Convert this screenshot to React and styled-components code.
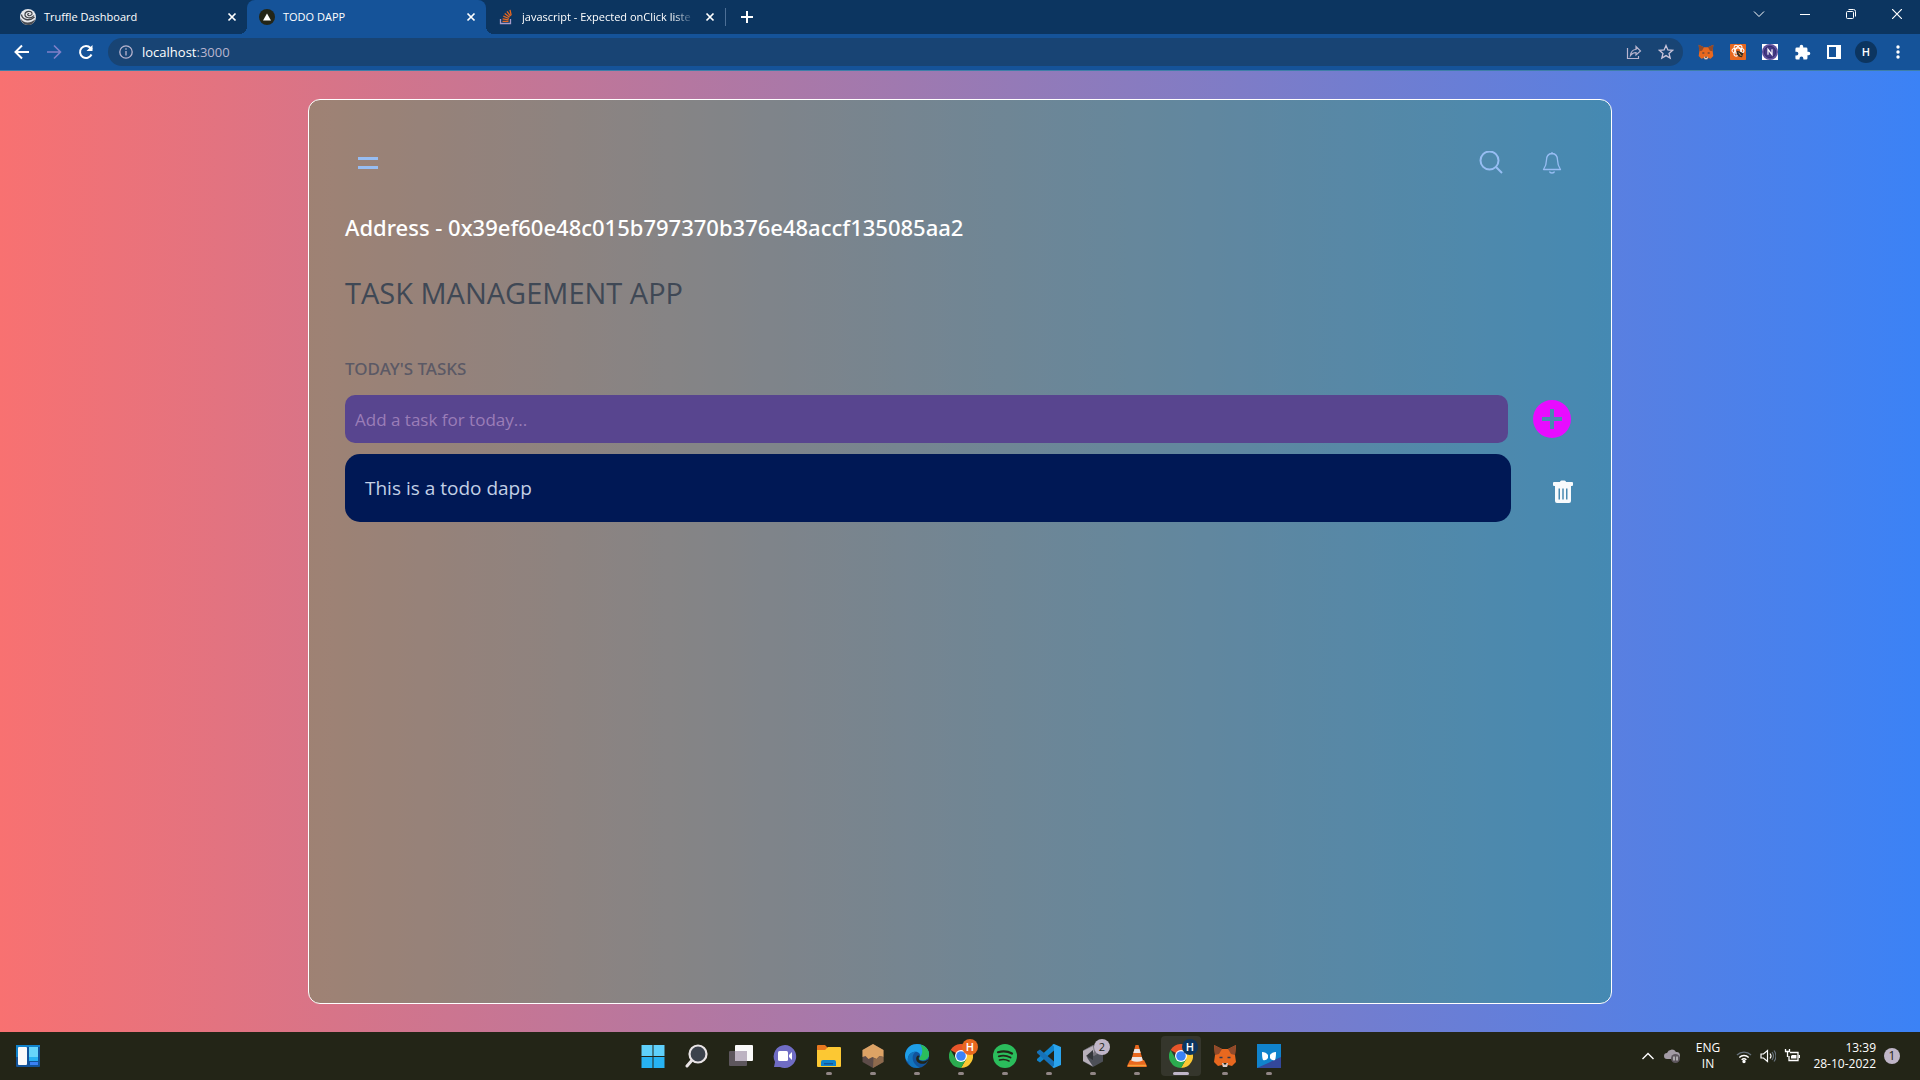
import React, { useState } from "react";
import styled, { createGlobalStyle } from "styled-components";

const GlobalStyle = createGlobalStyle`
  *, *::before, *::after { box-sizing: border-box; }
  body {
    margin: 0;
    font-family: "Open Sans", "Noto Sans", sans-serif;
  }
  button {
    border: 0;
    padding: 0;
    background: none;
    color: inherit;
    font: inherit;
    display: flex;
    align-items: center;
    justify-content: center;
  }
  svg { display: block; flex: none; }
`;

const Desktop = styled.div`
  min-height: 100vh;
  display: flex;
  flex-direction: column;
  background: #155399;
`;

/* ---------- browser chrome ---------- */

const TabStrip = styled.header`
  height: 34px;
  display: flex;
  padding-left: 8px;
  background: #0c3560;
  color: #fff;
`;

const Tab = styled.div`
  position: relative;
  width: 239px;
  display: flex;
  align-items: center;
  gap: 8px;
  padding: 0 7px 0 12px;
  border-radius: 8px 8px 0 0;
  font-size: 11px;
  line-height: 16px;
  background: ${(p) => (p.$active ? "#155399" : "transparent")};

  &::before, &::after {
    content: "";
    display: ${(p) => (p.$active ? "block" : "none")};
    position: absolute;
    bottom: 0;
    width: 8px;
    height: 8px;
  }
  &::before {
    left: -8px;
    background: radial-gradient(circle at 0 0, transparent 8px, #155399 8px);
  }
  &::after {
    right: -8px;
    background: radial-gradient(circle at 100% 0, transparent 8px, #155399 8px);
  }
`;

const TabTitle = styled.span`
  flex: 1;
  min-width: 0;
  white-space: nowrap;
  ${(p) => p.$fade && "mask-image: linear-gradient(to right, #000 88%, transparent);"}
`;

const TabClose = styled.button`
  width: 16px;
  height: 16px;
`;

const TabDivider = styled.span`
  width: 1px;
  height: 18px;
  margin-top: 8px;
  background: #4d6f96;
`;

const NewTab = styled.button`
  width: 42px;
`;

const WindowControls = styled.div`
  display: flex;
  height: 28px;
  margin-left: auto;
`;

const WindowButton = styled.button`
  width: 46px;
`;

const Toolbar = styled.nav`
  height: 37px;
  display: flex;
  align-items: center;
  padding: 0 6px;
  border-bottom: 1px solid #3f7fa8;
  color: #fff;
`;

const ToolButton = styled.button`
  width: 32px;
  height: 28px;
  color: ${(p) => (p.$dim ? "#8080c8" : "#fff")};
`;

const Omnibox = styled.div`
  flex: 1;
  height: 28px;
  margin: 0 7px 0 6px;
  padding: 0 1px 0 11px;
  display: flex;
  align-items: center;
  border-radius: 14px;
  background: #184474;
  color: #b9b5cf;
`;

const UrlText = styled.span`
  flex: 1;
  padding-left: 9px;
  font-size: 13px;
  line-height: 20px;
  b { font-weight: 400; color: #fff; }
`;

const Avatar = styled.span`
  width: 22px;
  height: 22px;
  display: grid;
  place-items: center;
  border-radius: 50%;
  background: #0c3560;
  font-size: 11px;
  line-height: 16px;
  font-weight: 600;
`;

/* ---------- page ---------- */

const Page = styled.main`
  flex: 1;
  display: flex;
  justify-content: center;
  padding: 28px;
  background: linear-gradient(to right, #f87171, #3b82f6);
`;

const Card = styled.section`
  flex: 1;
  max-width: 1304px;
  padding: 40px 36px;
  border: 1px solid #fff;
  border-radius: 12px;
  background: rgba(22, 163, 74, 0.3);
`;

const CardHeader = styled.div`
  display: flex;
  gap: 15px;
  color: #97bdf3;
`;

const IconButton = styled.button`
  width: 46px;
  height: 46px;
  &:first-child { margin-right: auto; }
`;

const Address = styled.h2`
  margin: 25px 0 0;
  font-family: "Noto Sans", "Open Sans", sans-serif;
  font-size: 22px;
  line-height: 32px;
  font-weight: 500;
  color: #fff;
`;

const Title = styled.h1`
  margin: 32px 0 0;
  font-size: 29px;
  line-height: 36px;
  font-weight: 400;
  color: #3f4855;
`;

const SectionLabel = styled.h3`
  margin: 44px 0 12px;
  font-family: "Noto Sans", "Open Sans", sans-serif;
  font-size: 17px;
  line-height: 28px;
  font-weight: 500;
  color: #5b5965;
`;

const AddRow = styled.form`
  display: flex;
  align-items: center;
  gap: 20px;
  margin-bottom: 11px;
`;

const TaskInput = styled.input`
  flex: 1;
  min-width: 0;
  height: 48px;
  padding: 0 10px;
  border: 0;
  border-radius: 10px;
  background: #58458f;
  color: #fff;
  font-family: inherit;
  font-size: 17px;
  &::placeholder { color: #9b7db8; opacity: 1; }
`;

const AddButton = styled.button`
  width: 47px;
  height: 48px;
  color: #e80cff;
`;

const TaskList = styled.ul`
  margin: 0;
  padding: 0;
  list-style: none;
`;

const TaskRow = styled.li`
  display: flex;
  align-items: center;
  gap: 40px;
`;

const TaskText = styled.div`
  flex: 1;
  padding: 20px;
  border-radius: 15px;
  background: #001855;
  color: #c3d0e6;
  font-size: 19px;
  line-height: 28px;
`;

const DeleteButton = styled.button`
  width: 24px;
  padding-top: 8px;
  color: #f8fafc;
`;

/* ---------- taskbar ---------- */

const Taskbar = styled.footer`
  height: 48px;
  display: grid;
  grid-template-columns: 1fr auto 1fr;
  align-items: center;
  background: #232517;
  color: #fff;
`;

const Widgets = styled.button`
  width: 56px;
  height: 48px;
`;

const Apps = styled.div`
  display: flex;
  gap: 4px;
  padding-left: 2px;
`;

const AppButton = styled.button`
  position: relative;
  width: 40px;
  height: 40px;
  border-radius: 4px;
  background: ${(p) => (p.$active ? "#35362c" : "transparent")};
  &::after {
    content: "";
    display: ${(p) => (p.$running ? "block" : "none")};
    position: absolute;
    bottom: 1px;
    width: ${(p) => (p.$active ? "16px" : "6px")};
    height: 3px;
    border-radius: 2px;
    background: ${(p) => (p.$active ? "#c0b6c8" : "#918686")};
  }
`;

const Badge = styled.span`
  position: absolute;
  top: 3px;
  right: 3px;
  width: 16px;
  height: 16px;
  display: grid;
  place-items: center;
  border-radius: 50%;
  background: ${(p) => p.$bg};
  color: ${(p) => p.$fg || "#fff"};
  font-size: 11px;
  line-height: 16px;
  font-weight: ${(p) => (p.$fg ? 400 : 600)};
`;

const Tray = styled.div`
  display: flex;
  align-items: center;
  justify-content: flex-end;
  padding-right: 20px;
  font-size: 12px;
  line-height: 16px;
`;

const TrayButton = styled.button`
  width: 24px;
  height: 40px;
`;

const Language = styled.button`
  width: 48px;
  text-align: center;
`;

const Clock = styled.time`
  width: 72px;
  margin-right: 8px;
  text-align: right;
  white-space: nowrap;
`;

const Count = styled.span`
  width: 16px;
  height: 16px;
  display: grid;
  place-items: center;
  border-radius: 50%;
  background: #c0b6c8;
  color: #232517;
`;

/* ---------- icons ---------- */

const Line = ({ size = 16, w = 1.5, box = size, children }) => (
  <svg width={size} height={size} viewBox={`0 0 ${box} ${box}`} fill="none" stroke="currentColor" strokeWidth={w}>
    {children}
  </svg>
);

const Art = ({ size = 24, children }) => (
  <svg width={size} height={size} viewBox="0 0 24 24">{children}</svg>
);

const CloseIcon = () => <Line size={10} w={1.7}><path d="M1.5 1.5l7 7M8.5 1.5l-7 7" /></Line>;

const TruffleIcon = () => (
  <svg width="16" height="16" viewBox="0 0 16 16">
    <circle cx="8" cy="8" r="8" fill="#e6e8ec" />
    <path d="M.8 9.500C3 14 10 15 15 10.500 14.500 14 11.500 16 8 16 4 16 1 13 .8 9.500z" fill="#4a4c52" />
    <path d="M1.500 5.500C2 10.500 9 13 14.500 8" fill="none" stroke="#3f4248" strokeWidth="1.300" />
    <path d="M14 6.500C11 10.500 4.500 9 5 5c.5-3 6-3.500 7-1 .7 2-2.500 3.500-4 2.200-1-1 .3-2 1.200-1.500" fill="none" stroke="#3f4248" strokeWidth="1.200" />
  </svg>
);

const DappIcon = () => (
  <svg width="16" height="16" viewBox="0 0 16 16">
    <circle cx="8" cy="8" r="8" fill="#232517" />
    <path d="M8 4.500l4 7H4z" fill="#fff" />
  </svg>
);

const StackIcon = () => (
  <svg width="16" height="16" viewBox="0 0 16 16" fill="none" strokeWidth="1.300">
    <path d="M2.500 10v4.500h10V10" stroke="#a89bc8" />
    <path d="M4.500 12.300h6M4.600 9.900l6 1M5.300 7.200l5.600 2.300M6.700 4.500l4.900 3.700M9 2.300l3.500 4.800M12 .8l1.200 5.500" stroke="#e8681f" />
  </svg>
);

const Fox = ({ size = 16 }) => (
  <Art size={size}>
    <path d="M1 1l8 4h6l8-4-1 10 1 7-4 4-4-1-1 2h-4l-1-2-4 1-4-4 1-7z" fill="#e8681f" />
    <path d="M1 1l8 4-3 5-4 1zM23 1l-8 4 3 5 4 1z" fill="#8f4a2b" />
    <path d="M9 19h6l-1 4h-4z" fill="#d9cfd0" />
    <path d="M10.500 19h3l-.5 1.500h-2z" fill="#232517" />
    <path d="M6.500 13.500h3M17.500 13.500h-3" stroke="#31384c" strokeWidth="1.500" />
  </Art>
);

const ReactToolIcon = () => (
  <Art size={16}>
    <rect width="24" height="24" rx="1" fill="#e8681f" />
    <g fill="none" stroke="#fff" strokeWidth="1.600">
      <ellipse cx="12" cy="10" rx="9" ry="4" />
      <ellipse cx="12" cy="10" rx="9" ry="4" transform="rotate(60 12 10)" />
      <ellipse cx="12" cy="10" rx="9" ry="4" transform="rotate(120 12 10)" />
    </g>
    <path d="M10 10l4 1 6 3-2 6-5-1-3-4z" fill="#3a2b20" />
    <path d="M13 13l4 5" stroke="#e8a13c" strokeWidth="1.500" />
  </Art>
);

const NIcon = () => (
  <Art size={16}>
    <rect width="24" height="24" fill="#fff" />
    <circle cx="12" cy="12" r="12" fill="#5d4f9c" />
    <circle cx="12" cy="12" r="8.500" fill="#443a86" stroke="#2a245c" />
    <path d="M9 16V8l6 8V8" fill="none" stroke="#fff" strokeWidth="1.800" />
  </Art>
);

const PuzzleIcon = () => (
  <Art size={17}>
    <path fill="#fff" d="M20.500 11H19V7a2 2 0 0 0-2-2h-4V3.500a2.500 2.500 0 0 0-5 0V5H4a2 2 0 0 0-2 2v3.800h1.500a2.700 2.700 0 0 1 0 5.400H2V20a2 2 0 0 0 2 2h3.800v-1.500a2.700 2.700 0 0 1 5.400 0V22H17a2 2 0 0 0 2-2v-4h1.500a2.500 2.500 0 0 0 0-5z" />
  </Art>
);

const SidePanelIcon = () => (
  <svg width="14" height="14" viewBox="0 0 14 14"><path fill="#fff" fillRule="evenodd" d="M0 0h14v14H0zM2 2v10h7V2z" /></svg>
);

const MenuDots = () => (
  <svg width="4" height="14" viewBox="0 0 4 14" fill="#fff">
    <circle cx="2" cy="2" r="1.700" /><circle cx="2" cy="7" r="1.700" /><circle cx="2" cy="12" r="1.700" />
  </svg>
);

const MenuIcon = () => (
  <svg width="20" height="12" viewBox="0 0 20 12" fill="currentColor"><path d="M0 0h20v3H0zM0 9h20v3H0z" /></svg>
);

const SearchIcon = () => (
  <Line size={24} w={2}><circle cx="10.500" cy="9.500" r="9" /><path d="M16.500 15.500l6.500 6.500" /></Line>
);

const BellIcon = () => (
  <Line size={24} w={1.3}>
    <path d="M12 1v1.500C8 2.800 6.500 6 6.500 9c0 4.500-1 6.500-3 9.500h17c-2-3-3-5-3-9.500 0-3-1.500-6.200-5.500-6.500" strokeLinejoin="round" />
    <path d="M9.500 20.500c.5 2 4.500 2 5 0" />
  </Line>
);

const PlusCircle = () => (
  <svg width="38" height="38" viewBox="0 0 38 38">
    <path fill="currentColor" fillRule="evenodd" d="M19 0a19 19 0 1 1 0 38 19 19 0 0 1 0-38zM17 9v8H9v4h8v8h4v-8h8v-4h-8V9z" />
  </svg>
);

const TrashIcon = () => (
  <svg width="20" height="24" viewBox="0 0 20 24">
    <path
      fill="currentColor"
      fillRule="evenodd"
      d="M7 2q0-1.500 1.500-1.500h3q1.500 0 1.500 1.500h6q1 0 1 1v2q0 1-1 1h-1v15q0 2-2 2H4q-2 0-2-2V6H1q-1 0-1-1V3q0-1 1-1zM5.500 8.500v11H7v-11zM9.250 8.500v11h1.500v-11zM13 8.500v11h1.500v-11z"
    />
  </svg>
);

const WidgetsIcon = () => (
  <Art>
    <rect y="1" width="24" height="22" rx="1" fill="#12539a" />
    <path d="M0 1h24v2H2v10H0z" fill="#1083cc" />
    <rect x="2" y="3" width="9" height="18" rx="1" fill="#fafafa" />
    <path d="M13 3h9v10h-9z" fill="#67d5fa" /><path d="M13 13h9v4h-9z" fill="#27b2f2" /><path d="M14 18h8v3h-8z" fill="#3b82f6" />
  </Art>
);

const WindowsIcon = () => (
  <Art>
    <path d="M.5 1h11v11h-11zM12.500 1h11v11h-11z" fill="#5fd0fb" />
    <path d="M.5 13h11v11h-11zM12.500 13h11v11h-11z" fill="#27b2f2" />
  </Art>
);

const TaskSearchIcon = () => (
  <Art>
    <path d="M2 22l6-7" stroke="#e9e4e6" strokeWidth="3" strokeLinecap="round" />
    <circle cx="13" cy="10" r="8.500" fill="#3b424c" stroke="#e9e4e6" strokeWidth="2.200" />
  </Art>
);

const TaskViewIcon = () => (
  <Art>
    <rect x="6" y="1" width="18" height="16" rx="1" fill="#fafafa" />
    <rect x="0" y="7" width="18" height="15" rx="1" fill="#5d565d" />
    <path d="M6 7h12v10H6z" fill="#bdb3c2" />
  </Art>
);

const ChatIcon = () => (
  <Art>
    <path d="M12 1a11.500 11.500 0 1 1-5 22H1l1-5A11.500 11.500 0 0 1 12 1z" fill="#6f6cc4" />
    <rect x="5" y="7" width="10" height="10" rx="1.500" fill="#fff" /><path d="M16 11l3-3v8l-3-3z" fill="#fff" />
  </Art>
);

const FolderIcon = () => (
  <Art>
    <path d="M0 2q0-1 1-1h7l3 3v4H0z" fill="#e8781f" />
    <path d="M0 6h8l3-3h12q1 0 1 1v18q0 1-1 1H1q-1 0-1-1z" fill="#fcc833" />
    <path d="M4 22v-4q0-2 2-2h11q2 0 2 2v4z" fill="#1083cc" /><path d="M7 19h9v1.500H7z" fill="#12539a" />
  </Art>
);

const GanacheIcon = () => (
  <Art>
    <path d="M12 0l10.500 6v12L12 24 1.500 18V6z" fill="#5d4c49" />
    <path d="M12 0l10.500 6v7l-4-1-3 3-4-2-4 2-3-3-3 1V6z" fill="#dda365" />
    <path d="M12 24l10.500-6v-5l-4-1-3 3-3-1z" fill="#8e6a4d" />
  </Art>
);

const EdgeIcon = () => (
  <Art>
    <circle cx="12" cy="12" r="12" fill="#12539a" />
    <path d="M0 11C1 3 7 0 12 0c8 0 12 6 12 10 0 5-4 7-8 6-2 0-2-2-1-3 1-3-2-6-6-5-5 1-7 5-6 10-2-2-3-4-3-7z" fill="#1f9fe8" />
    <path d="M15 .5C21 2 24 6 24 10c0 5-4 7-8 6-2 0-2-2-1-3 3-3 3-9 0-12.500z" fill="#2bbd5c" />
    <path d="M3 18C2 12 6 7 10.500 8 5 12 8 21 15 23.500 9 25 4 22 3 18z" fill="#1274bd" />
    <path d="M14.500 12c-1.500 2-1 4.500 1.500 5 3 .8 5 0 8-2-1 2-2 3-4 4.500-6 1.500-10-2.500-8.500-6.500.6-1.500 2-2 3-1z" fill="#232517" />
  </Art>
);

const ChromeIcon = () => (
  <Art>
    <path d="M12 12L1.600 6A12 12 0 0 1 22.400 6z" fill="#e8552a" />
    <path d="M12 6h10.400A12 12 0 0 1 12 24l5.200-9z" fill="#fcc833" />
    <path d="M6.800 15L1.600 6A12 12 0 0 0 12 24l5.200-9z" fill="#2bab4f" />
    <circle cx="12" cy="12" r="6" fill="#fff" /><circle cx="12" cy="12" r="4.800" fill="#3b82f6" />
  </Art>
);

const SpotifyIcon = () => (
  <Art>
    <circle cx="12" cy="12" r="12" fill="#2bbd5c" />
    <g fill="none" stroke="#232517" strokeLinecap="round">
      <path d="M5 8.200c5-1.500 10-1 14 1.300" strokeWidth="2.200" />
      <path d="M5.800 12.300c4-1.200 8-.8 11.700 1.200" strokeWidth="1.900" />
      <path d="M6.500 16c3.500-.9 6.500-.6 9.500 1" strokeWidth="1.600" />
    </g>
  </Art>
);

const CodeIcon = () => (
  <Art>
    <path d="M17 0v6.500L3 18.500 0 16.500v-1.500L16 .5z" fill="#1083cc" />
    <path d="M17 24v-6.500L3 5.500 0 7.500V9l16 14.500z" fill="#1671b8" />
    <path d="M17 0l7 3v18l-7 3-1.500-1 1.500-1.500v-19L15.500 1z" fill="#2aa4ee" />
  </Art>
);

const CubeIcon = () => (
  <Art>
    <path d="M12 1l10 5.500v11L12 23 2 17.500v-11z" fill="#4d5058" />
    <path d="M12 1l10 5.500L13 12 2 6.500z" fill="#75727a" />
    <path d="M12 2L2 7v10l10 5.500-6-9 7-5.500z" fill="#b8b0ba" />
    <path d="M12 6l-7 6 7 4z" fill="#34363a" />
  </Art>
);

const ConeIcon = () => (
  <Art>
    <path d="M5 16h14l3 6q0 1-1 1H3q-1 0-1-1z" fill="#e8681f" />
    <path d="M10.500 1h3l4.500 16q-6 3-12 0z" fill="#e8681f" />
    <path d="M9.500 5h5l1.200 4H8.300zM7.200 13h9.600l1 3.500q-5.800 2.500-11.600 0z" fill="#ebe5e5" />
    <path d="M3 21.500h18" stroke="#f5a33c" strokeWidth="1.500" />
  </Art>
);

const BowtieIcon = () => (
  <Art>
    <rect width="24" height="24" fill="#1083cc" /><path d="M0 24h24V13z" fill="#33489b" />
    <path d="M5 8q4 0 6 3v3q-2 3-5 2-1-2-1-8zM19 8q-4 0-6 3v3q2 3 5 2 1-2 1-8z" fill="#fff" />
  </Art>
);

const APPS = [
  { name: "Start", icon: <WindowsIcon /> },
  { name: "Search", icon: <TaskSearchIcon /> },
  { name: "Task view", icon: <TaskViewIcon /> },
  { name: "Chat", icon: <ChatIcon /> },
  { name: "File Explorer", icon: <FolderIcon />, running: true },
  { name: "Ganache", icon: <GanacheIcon />, running: true },
  { name: "Edge", icon: <EdgeIcon />, running: true },
  { name: "Chrome", icon: <ChromeIcon />, running: true, badge: ["H", "#e8681f"] },
  { name: "Spotify", icon: <SpotifyIcon />, running: true },
  { name: "Code", icon: <CodeIcon />, running: true },
  { name: "Hardhat", icon: <CubeIcon />, running: true, badge: ["2", "#c0b6c8", "#232517"] },
  { name: "VLC", icon: <ConeIcon />, running: true },
  { name: "Chrome profile", icon: <ChromeIcon />, running: true, active: true, badge: ["H", "#0c3560"] },
  { name: "MetaMask", icon: <Fox size={24} />, running: true },
  { name: "Recorder", icon: <BowtieIcon />, running: true },
];

const TABS = [
  { title: "Truffle Dashboard", icon: <TruffleIcon /> },
  { title: "TODO DAPP", icon: <DappIcon />, active: true },
  { title: "javascript - Expected onClick liste", icon: <StackIcon />, fade: true },
];

const EXTENSIONS = [
  ["MetaMask", <Fox />],
  ["React tools", <ReactToolIcon />],
  ["N", <NIcon />],
  ["Extensions", <PuzzleIcon />],
  ["Side panel", <SidePanelIcon />],
  ["Profile", <Avatar>H</Avatar>],
  ["Menu", <MenuDots />],
];

function BrowserChrome() {
  return (
    <>
      <TabStrip>
        {TABS.map((t) => (
          <Tab key={t.title} $active={t.active}>
            {t.icon}
            <TabTitle $fade={t.fade}>{t.title}</TabTitle>
            <TabClose aria-label="Close tab"><CloseIcon /></TabClose>
          </Tab>
        ))}
        <TabDivider />
        <NewTab aria-label="New tab"><Line size={12} w={2}><path d="M6 0v12M0 6h12" /></Line></NewTab>
        <WindowControls>
          <WindowButton aria-label="Search tabs"><Line size={12} w={1}><path d="M1 3.500l5 5 5-5" /></Line></WindowButton>
          <WindowButton aria-label="Minimize"><Line size={10} w={1}><path d="M0 5.500h10" /></Line></WindowButton>
          <WindowButton aria-label="Restore"><Line size={10} w={1}><rect x=".5" y="2.500" width="7" height="7" rx="1" /><path d="M2.500.5h5q2 0 2 2v5" /></Line></WindowButton>
          <WindowButton aria-label="Close"><Line size={10} w={1.2}><path d="M0 0l10 10M10 0L0 10" /></Line></WindowButton>
        </WindowControls>
      </TabStrip>
      <Toolbar>
        <ToolButton aria-label="Back"><Line w={2}><path d="M15 8H2M8 1.500L1.500 8 8 14.500" /></Line></ToolButton>
        <ToolButton aria-label="Forward" $dim><Line w={1.6}><path d="M1 8h13M8 1.500L14.500 8 8 14.500" /></Line></ToolButton>
        <ToolButton aria-label="Reload"><Line w={2}><path d="M13.500 10.500A6 6 0 1 1 12.500 4L14 5.500" /><path d="M14.500 1v6H8.500z" fill="currentColor" stroke="none" /></Line></ToolButton>
        <Omnibox>
          <Line size={14} w={1.3}><circle cx="7" cy="7" r="6.200" /><path d="M7 6v4.500M7 3.300v1.500" /></Line>
          <UrlText><b>localhost</b>:3000</UrlText>
          <ToolButton aria-label="Share">
            <Line w={1.2}><path d="M1.500 4v10.500h11V12M4.500 11.500c.5-4 2.500-6 5.500-6V2.500l4.500 4.500L10 11V8.500c-2.500 0-4 1-5.500 3z" stroke="#b9b5cf" /></Line>
          </ToolButton>
          <ToolButton aria-label="Bookmark">
            <Line w={1.3}><path d="M8 1.500l1.900 4.400 4.800.4-3.700 3.100 1.200 4.700L8 11.600l-4.200 2.500L5 9.400 1.300 6.300l4.800-.4z" stroke="#c9c4da" /></Line>
          </ToolButton>
        </Omnibox>
        {EXTENSIONS.map(([name, icon]) => (
          <ToolButton key={name} aria-label={name}>{icon}</ToolButton>
        ))}
      </Toolbar>
    </>
  );
}

function TodoPage() {
  const [tasks, setTasks] = useState(["This is a todo dapp"]);
  const [draft, setDraft] = useState("");

  const addTask = (e) => {
    e.preventDefault();
    if (!draft.trim()) return;
    setTasks([...tasks, draft.trim()]);
    setDraft("");
  };

  return (
    <Page>
      <Card>
        <CardHeader>
          <IconButton aria-label="Menu"><MenuIcon /></IconButton>
          <IconButton aria-label="Search"><SearchIcon /></IconButton>
          <IconButton aria-label="Notifications"><BellIcon /></IconButton>
        </CardHeader>
        <Address>Address - 0x39ef60e48c015b797370b376e48accf135085aa2</Address>
        <Title>TASK MANAGEMENT APP</Title>
        <SectionLabel>TODAY'S TASKS</SectionLabel>
        <AddRow onSubmit={addTask}>
          <TaskInput
            aria-label="New task"
            placeholder="Add a task for today..."
            value={draft}
            onChange={(e) => setDraft(e.target.value)}
          />
          <AddButton aria-label="Add task"><PlusCircle /></AddButton>
        </AddRow>
        <TaskList>
          {tasks.map((task, i) => (
            <TaskRow key={i}>
              <TaskText>{task}</TaskText>
              <DeleteButton aria-label="Delete task" onClick={() => setTasks(tasks.filter((_, n) => n !== i))}>
                <TrashIcon />
              </DeleteButton>
            </TaskRow>
          ))}
        </TaskList>
      </Card>
    </Page>
  );
}

function SystemTaskbar() {
  return (
    <Taskbar>
      <Widgets aria-label="Widgets"><WidgetsIcon /></Widgets>
      <Apps>
        {APPS.map((a) => (
          <AppButton key={a.name} aria-label={a.name} $running={a.running} $active={a.active}>
            {a.icon}
            {a.badge && <Badge $bg={a.badge[1]} $fg={a.badge[2]}>{a.badge[0]}</Badge>}
          </AppButton>
        ))}
      </Apps>
      <Tray>
        <TrayButton aria-label="Hidden icons"><Line size={12} w={1.4}><path d="M.5 9L6 3.500 11.500 9" /></Line></TrayButton>
        <TrayButton aria-label="Cloud sync">
          <svg width="16" height="14" viewBox="0 0 16 14">
            <path d="M3 10a3 3 0 0 1 0-6 5 5 0 0 1 9-1 3 3 0 0 1 1 7z" fill="#a39ba5" />
            <circle cx="11.500" cy="9.500" r="4.500" fill="#5d565d" /><path d="M10 7.500v4M13 7.500v4" stroke="#fff" />
          </svg>
        </TrayButton>
        <Language>ENG<br />IN</Language>
        <TrayButton aria-label="Wi-Fi">
          <Line size={16} w={1.4}>
            <path d="M1 7a10 10 0 0 1 14 0" stroke="#66707a" />
            <path d="M3.300 9.500a6.700 6.700 0 0 1 9.400 0M5.600 11.800a3.500 3.500 0 0 1 4.800 0" />
            <circle cx="8" cy="13.500" r="1" fill="currentColor" />
          </Line>
        </TrayButton>
        <TrayButton aria-label="Volume">
          <Line size={16} w={1.2}>
            <path d="M1 6v4h2.500l4 3.500v-11L3.500 6zM10 5.500q2 2.500 0 5" /><path d="M12 4q3 4 0 8M14 2.500q4 5.500 0 11" stroke="#66707a" />
          </Line>
        </TrayButton>
        <TrayButton aria-label="Battery">
          <Line size={16} w={1.3}>
            <path d="M6 4.500h8v8H5V8M15.500 7v3" /><path d="M8 7h4.500v3.500H7V8z" fill="currentColor" stroke="none" /><path d="M1.500 1v2.500h4V1M3.500 4v5M1 3.500h5" />
          </Line>
        </TrayButton>
        <Clock>13:39<br />28-10-2022</Clock>
        <Count>1</Count>
      </Tray>
    </Taskbar>
  );
}

export default function App() {
  return (
    <Desktop>
      <GlobalStyle />
      <BrowserChrome />
      <TodoPage />
      <SystemTaskbar />
    </Desktop>
  );
}
